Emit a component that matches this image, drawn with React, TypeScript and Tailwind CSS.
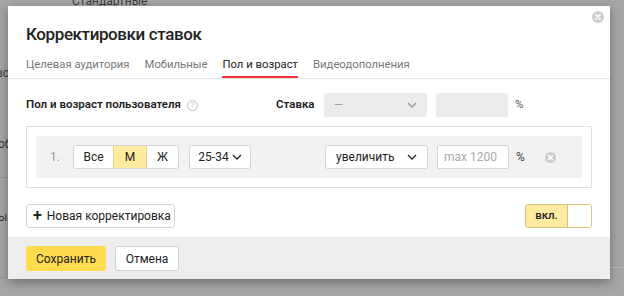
import React from "react";

const Chevron = ({ className = "" }: { className?: string }) => (
  <svg width="10" height="6" viewBox="0 0 10 6" className={className}>
    <polyline points="1,1 5,5 9,1" fill="none" stroke="currentColor" strokeWidth="1.3" />
  </svg>
);

const ClearIcon = ({ size = 12, color = "#c9c9c9" }: { size?: number; color?: string }) => (
  <svg width={size} height={size} viewBox="0 0 12 12">
    <circle cx="6" cy="6" r="6" fill={color} />
    <path d="M3.8 3.8 L8.2 8.2 M8.2 3.8 L3.8 8.2" stroke="#fff" strokeWidth="1.6" strokeLinecap="round" />
  </svg>
);

export default function App() {
  return (
    <div
      className="relative w-[624px] h-[296px] overflow-hidden bg-[#a6a6a6] text-[#222]"
      style={{ fontFamily: "Roboto, 'Noto Sans', sans-serif" }}
    >
      {/* underlying page fragments */}
      <div className="absolute left-[72px] top-[-8px] text-[12px] text-[#3c3c3c]">Стандартные</div>
      <div className="absolute left-[-4px] top-[64px] text-[12px] text-[#3c3c3c]">во</div>
      <div className="absolute left-[-2px] top-[135px] text-[12px] text-[#3c3c3c]">об</div>
      <div className="absolute left-[-2px] top-[208px] text-[12px] text-[#3c3c3c]">ы</div>
      <div className="absolute left-0 top-[177px] w-[10px] h-px bg-[#959595]" />
      <div className="absolute left-0 top-[277px] w-[10px] h-px bg-[#959595]" />
      <div className="absolute right-0 top-[267px] w-[16px] h-px bg-[#b8b8b8]" />

      {/* modal */}
      <div className="absolute left-[8px] top-[6px] w-[602px] h-[273px] bg-white shadow-[0_3px_10px_rgba(0,0,0,0.35)] flex flex-col">
        <div className="absolute right-[6px] top-[5px]">
          <ClearIcon size={12} color="#cfcfcf" />
        </div>

        <div className="pl-[18px] pt-[16px] h-[40px] text-[17px] tracking-[-0.4px] font-medium leading-[24px] text-[#222]">
          Корректировки ставок
        </div>

        <div className="mt-[6px] flex gap-[15px] px-[18px] border-b border-[#e6e6e6] text-[11.3px] text-[#777]">
          <div className="h-[26px] flex items-center">Целевая аудитория</div>
          <div className="h-[26px] flex items-center">Мобильные</div>
          <div className="h-[26px] flex items-center text-[#222] border-b-2 border-[#f33] pt-[2px]">Пол и возраст</div>
          <div className="h-[26px] flex items-center">Видеодополнения</div>
        </div>

        <div className="mt-[14px] px-[18px] flex items-center h-[24px] text-[11.5px]">
          <div className="w-[250px] flex items-center font-semibold">
            Пол и возраст пользователя
            <span className="ml-[6px] w-[11px] h-[11px] rounded-full border border-[#c4c4c4] text-[#c4c4c4] text-[8px] leading-none flex items-center justify-center font-normal">
              ?
            </span>
          </div>
          <div className="w-[48px] font-semibold">Ставка</div>
          <div className="w-[103px] h-[24px] bg-[#ebebeb] rounded-[2px] flex items-center justify-between px-[10px] text-[#999]">
            <span>—</span>
            <Chevron className="text-[#999]" />
          </div>
          <div className="ml-[9px] w-[72px] h-[24px] bg-[#ebebeb] rounded-[2px]" />
          <div className="ml-[7px] text-[#555]">%</div>
        </div>

        <div className="mt-[9px] mx-[18px] border border-[#e0e0e0] p-[9px]">
          <div className="h-[42px] bg-[#f2f2f2] flex items-center pl-[14px] text-[12px]">
            <div className="w-[23px] text-[#999]">1.</div>
            <div className="flex h-[24px] border border-[#d4d4d4] rounded-[3px] bg-white overflow-hidden">
              <div className="w-[39px] flex items-center justify-center">Все</div>
              <div className="w-[34px] flex items-center justify-center bg-[#ffeba0] border-x border-[#e6d48f]">М</div>
              <div className="w-[31px] flex items-center justify-center">Ж</div>
            </div>
            <div className="ml-[10px] w-[62px] h-[24px] border border-[#d4d4d4] rounded-[3px] bg-white flex items-center justify-center gap-[3px]">
              <span>25-34</span>
              <Chevron className="text-[#222]" />
            </div>
            <div className="ml-[74px] w-[103px] h-[24px] border border-[#d4d4d4] rounded-[3px] bg-white flex items-center justify-between pl-[10px] pr-[10px]">
              <span>увеличить</span>
              <Chevron className="text-[#222]" />
            </div>
            <div className="ml-[9px] w-[72px] h-[24px] border border-[#d4d4d4] rounded-[2px] bg-white flex items-center pl-[6px] text-[#aaa]">
              max 1200
            </div>
            <div className="ml-[7px] text-[#444]">%</div>
            <div className="ml-[20px] flex items-center">
              <ClearIcon size={11} color="#cccccc" />
            </div>
          </div>
        </div>

        <div className="mt-[16px] mx-[18px] flex items-center justify-between h-[24px]">
          <div className="h-[24px] w-[149px] border border-[#d4d4d4] rounded-[3px] flex items-center pl-[6px] text-[12px] whitespace-nowrap">
            <span className="text-[16px] font-semibold leading-none mr-[5px] mt-[-1px]">+</span>
            Новая корректировка
          </div>
          <div className="h-[24px] w-[67px] border border-[#d6c27c] rounded-[3px] flex overflow-hidden text-[11.5px] font-medium">
            <div className="w-[42px] bg-[#ffeba0] border-r border-[#d6c27c] flex items-center justify-center">вкл.</div>
            <div className="flex-1 bg-white" />
          </div>
        </div>

        <div className="mt-[9px] flex-1 bg-[#ededed] px-[18px] pt-[9px] flex gap-[9px] text-[12px]">
          <div className="h-[25px] w-[80px] bg-[#ffdb4d] rounded-[3px] flex items-center justify-center">Сохранить</div>
          <div className="h-[25px] w-[64px] bg-white border border-[#d0d0d0] rounded-[3px] flex items-center justify-center">Отмена</div>
        </div>
      </div>
    </div>
  );
}
